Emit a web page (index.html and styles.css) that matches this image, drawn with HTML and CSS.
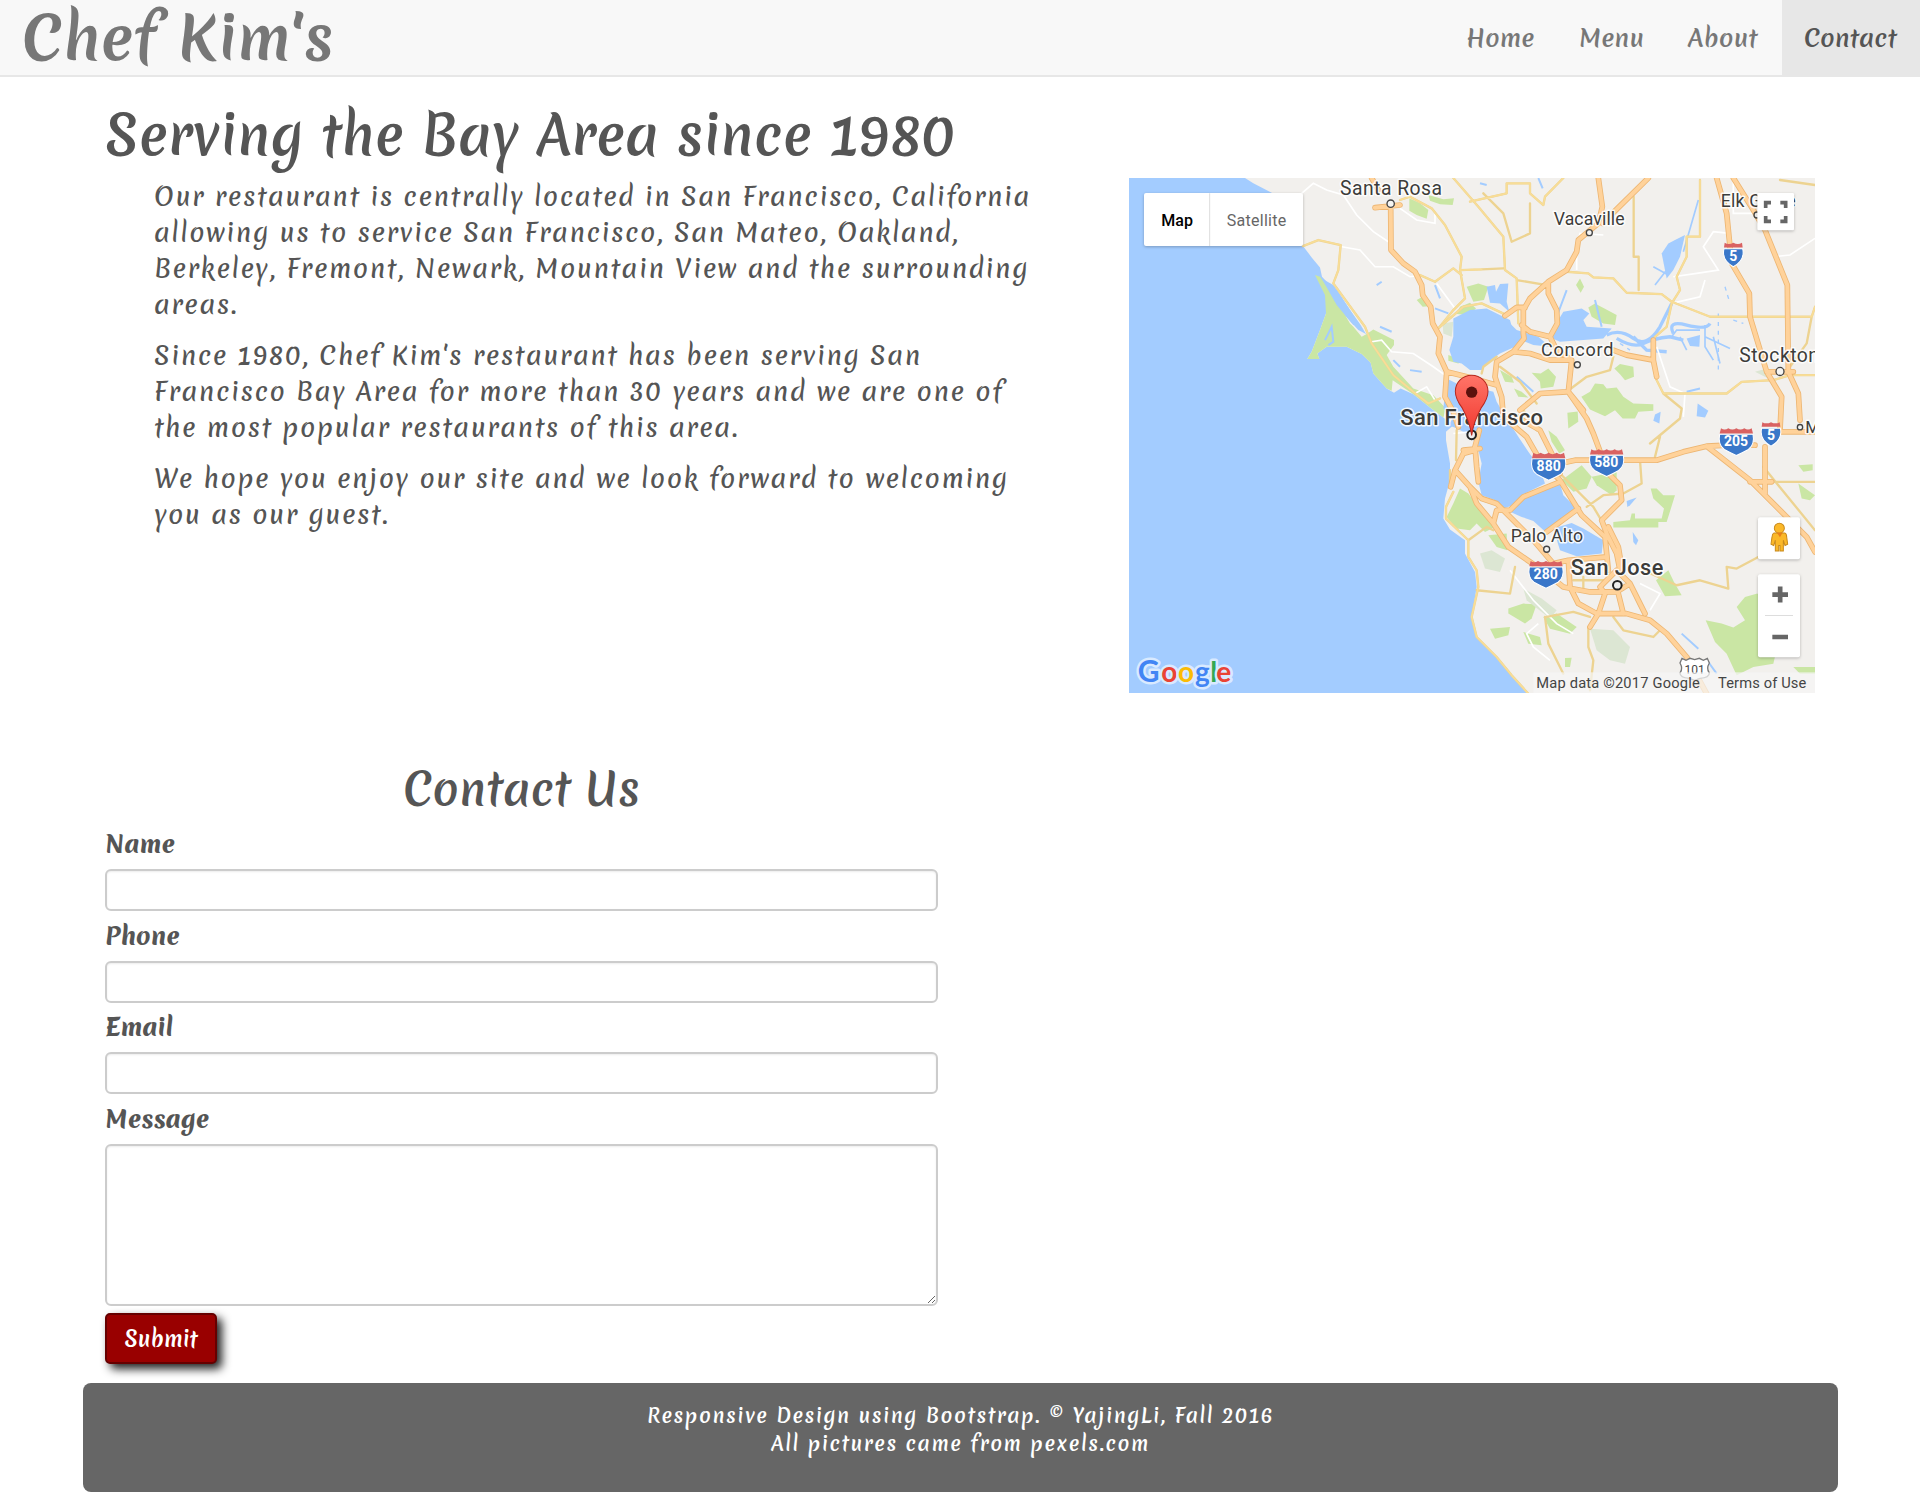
FILE: index.html
```html
<!DOCTYPE html>
<html lang="en">
<head>
<meta charset="utf-8">
<title>Chef Kim's - Contact</title>
<link rel="stylesheet" href="styles.css">
</head>
<body>
<nav class="navbar">
  <a class="brand" href="#">Chef Kim's</a>
  <div class="links">
    <a class="home" href="#">Home</a>
    <a class="menu" href="#">Menu</a>
    <a class="about" href="#">About</a>
    <a class="active" href="#">Contact</a>
  </div>
</nav>
<main class="container">
  <h1>Serving the Bay Area since 1980</h1>
  <div class="row">
    <div class="story">
      <p><span>Our restaurant is centrally located in San Francisco, California</span> <span>allowing us to service San Francisco, San Mateo, Oakland,</span> <span>Berkeley, Fremont, Newark, Mountain View and the surrounding</span> <span>areas.</span></p>
      <p><span>Since 1980, Chef Kim's restaurant has been serving San</span> <span>Francisco Bay Area for more than 30 years and we are one of</span> <span>the most popular restaurants of this area.</span></p>
      <p><span>We hope you enjoy our site and we look forward to welcoming</span> <span>you as our guest.</span></p>
    </div>
    <div class="map">
      <svg viewBox="27 24 2058 1544" preserveAspectRatio="none" width="686" height="515">
        <defs>
          <linearGradient id="pinfill" x1="0" y1="0" x2="0" y2="1"><stop offset="0" stop-color="#ff7468"/><stop offset="1" stop-color="#f0382e"/></linearGradient>
          <g id="interstate">
            <path d="M-50 -16Q-56 16 -36 30Q-18 40 0 48Q18 40 36 30Q56 16 50 -16Z" fill="#3a77c9" stroke="#fff" stroke-width="3"/>
            <path d="M-50 -18L-46 -34Q-35 -26 -24 -34Q-12 -26 0 -34Q12 -26 24 -34Q35 -26 46 -34L50 -18Z" fill="#d96262"/>
          </g>
          <g id="interstate-small">
            <path d="M-28 -16Q-36 18 0 38Q36 18 28 -16Z" fill="#3a77c9" stroke="#fff" stroke-width="3"/>
            <path d="M-28 -20L-26 -34Q-14 -27 0 -34Q14 -27 26 -34L28 -20Z" fill="#d96262"/>
          </g>
        </defs>
        <rect x="27" y="24" width="2058" height="1544" fill="#a3ccff"/>
        <!-- land -->
        <path class="land" d="M375 24L400 40L455 68L500 150L525 215L549 228L575 262L600 292L606 320L625 340L650 358L690 420L722 465L738 492L715 480L660 420L625 365L618 430L600 480L575 545L562 567L598 567L592 550L620 530L680 530L725 552L752 578L760 610L800 655L822 668L842 655L880 672L930 712L970 742L1000 765L978 785L978 810L990 880L990 930L975 985L970 1045L990 1078L1035 1110L1035 1150L1065 1205L1070 1250L1055 1340L1070 1400L1130 1460L1175 1515L1225 1570H2085V24Z"/>
        <!-- parks -->
        <g class="park">
          <path d="M585 315L615 375L618 430L600 480L575 545L562 567H598L592 550L620 530L680 530L725 552L752 578L760 610L800 655L815 662L818 630L880 672L930 712L970 742L978 715L940 675L880 655L820 590L800 555L822 525L822 510L760 478L740 492L725 500L700 470L690 460L640 375L600 320Z"/>
          <path d="M868 85L900 100L925 120L920 146L890 135L868 122Z"/><path d="M925 75L970 88L1002 85L998 105L960 103L930 92Z"/><path d="M890 390L912 378L935 408L908 410Z"/>
          <path d="M1040 350L1075 340L1105 350L1092 390L1060 395Z"/><path d="M1020 410L1050 398L1068 415L1045 435L1010 432Z"/><path d="M985 555L1028 570L1015 580L985 572Z"/>
          <path d="M1368 345L1380 325L1392 350L1382 368Z"/><path d="M1405 412L1425 400L1490 435L1485 465L1450 460L1415 440Z"/>
          <path d="M1235 608L1262 610L1285 595L1308 620L1300 650L1262 655L1260 635Z"/><path d="M1483 595L1500 582L1540 590L1542 620L1515 630L1500 612Z"/>
          <path d="M1384 680L1410 665L1425 640L1450 642L1460 655L1490 652L1510 680L1540 700L1600 702L1600 722L1555 725L1545 745L1508 745L1485 720L1455 738L1410 718Z"/>
          <path d="M1342 728L1373 724L1375 755L1345 775Z"/><path d="M1140 600L1175 620L1182 638L1155 635Z"/><path d="M1182 655L1205 665L1225 682L1195 680Z"/>
          <path d="M1020 955L1045 970L1090 1030L1125 1070L1095 1085L1070 1060L1050 1080L1010 1075L980 1040L1000 1000Z"/>
          <path d="M1105 1095L1160 1090L1162 1140L1130 1130Z"/><path d="M1325 930L1385 885L1415 920L1400 955L1360 965Z"/><path d="M1415 920L1490 905V960L1475 975L1430 945Z"/>
          <path d="M1592 955H1610L1630 975H1665L1648 1030L1640 1055H1615V1072H1480V1055L1530 1050L1535 1030H1545V1045H1625L1632 1015L1600 985Z"/>
          <path d="M1608 1230L1645 1200L1662 1235L1685 1275L1635 1278Z"/><path d="M1165 1315L1210 1300L1250 1302L1235 1345L1215 1360L1165 1330Z"/><path d="M1110 1375L1170 1370L1165 1395L1125 1405Z"/>
          <path d="M1270 1340L1310 1330L1370 1370L1350 1390L1290 1375Z"/><path d="M1210 1385L1260 1400L1265 1425L1225 1420Z"/><path d="M1335 1463L1355 1462L1350 1490H1335Z"/>
          <path d="M1757 1350L1805 1360L1840 1372L1875 1350L1850 1310L1875 1280L1912 1270L1990 1350L1960 1480L1900 1490L1850 1515L1820 1450L1785 1415Z"/><path d="M2035 885L2078 882V900L2050 905Z"/><path d="M2035 940L2085 975L2070 990L2045 985Z"/><path d="M2020 1490L2085 1490V1510H2040Z"/>
          <path d="M1285 780L1310 800L1335 840L1318 850L1295 815Z"/>
        </g>
        <g class="hills"><path d="M1080 1150L1115 1140L1155 1165L1140 1205L1095 1195Z"/><path d="M1210 1255L1265 1285L1310 1320L1290 1345L1220 1290Z"/><path d="M1410 1375L1480 1380L1530 1430L1515 1480L1470 1470L1430 1440Z"/><path d="M968 460L1000 455L995 500L970 490Z"/><path d="M1905 605L1940 595L1945 625Z"/></g>
        <!-- bays, rivers and lakes -->
        <g class="water">
          <path d="M1000 445L1050 420L1100 415L1170 450L1180 488L1212 500L1185 530L1140 550L1110 572L1085 600L1050 600L1025 580L1000 575L988 540L1000 500Z"/>
          <path d="M1100 350L1125 345L1128 365L1140 342L1165 340L1160 395L1168 425L1140 400L1110 398Z"/>
          <path d="M1150 440L1190 480L1255 500L1290 530L1240 525L1180 500Z"/>
          <path d="M980 625L1010 640L1060 650L1120 665L1130 695L1145 720L1195 800L1225 845L1258 890L1275 940L1205 975L1180 1005L1150 1015L1125 990L1085 975L1075 935L1085 880L1075 840L1055 800L1012 775L985 765L1000 742L970 715Z"/>
          <path d="M1180 990L1270 948L1320 940L1330 975L1368 1012L1325 1050L1280 1088L1240 1052L1205 1040L1165 1022Z"/>
          <path d="M1300 1075L1355 1058L1390 1075L1450 1110L1445 1150L1370 1158L1320 1140Z"/>
          <path d="M1285 500L1330 425L1385 415L1408 430L1390 450L1400 470L1475 475L1450 505L1320 515Z"/>
          <path d="M1645 220L1665 210L1695 195L1680 260L1660 300L1640 325L1625 250Z"/>
          <path d="M1700 505L1740 495L1738 530L1710 528Z"/><path d="M1733 700L1765 722L1755 742L1730 738Z"/><path d="M1605 733L1622 725L1618 760L1600 752Z"/><path d="M1520 992L1550 982L1530 1005L1522 1010Z"/><path d="M1538 1085L1555 1110L1548 1125L1540 1115Z"/>
          <path d="M605 325L640 345L720 465L700 465L650 405Z"/>
        </g>
        <g class="river">
          <path d="M1460 495Q1500 475 1540 505T1620 470L1655 400M1490 505Q1540 535 1570 520T1650 500L1690 510M1540 500L1580 540L1640 545M1660 490Q1640 450 1700 465T1770 460" stroke-width="10"/>
          <path d="M1690 245L1735 90M1640 300L1605 345M1600 290L1645 315M1755 465V530L1780 570M1755 500L1830 535M1680 500L1700 540M1655 500L1670 480L1740 480M1780 500L1800 580" stroke-width="5"/>
          <path d="M615 510L635 470L640 515L625 525M780 470L815 485M945 345L960 385M945 415L985 430M870 600L905 605M820 570L840 590M770 345L785 335M1255 24L1268 55M1080 40L1100 45M1310 440L1340 360M1425 390L1445 470M1190 620L1240 665M1700 665L1740 655M1685 1390L1735 1435M1765 1475L1790 1510" stroke-width="6"/>
          <path d="M1795 430V600M1815 350L1830 400M1840 450L1870 460M1500 520L1530 540" stroke-width="4" stroke-dasharray="12 14"/>
        </g>
        <!-- local roads -->
        <g class="lane"><path d="M545 70L580 40L620 60L670 75L710 135L760 185L805 215M665 230L720 240L765 290L820 290L870 320L905 315M755 515L785 510L815 545L880 550L940 590L975 615M840 115L890 150L945 160V130M950 340L1005 415M885 670L920 650L945 690M1370 300V240L1380 190L1450 195M1840 24V130H1900M1830 190L1780 185L1750 230L1795 300L1730 310L1660 320M1655 400L1740 380L1755 330M1610 530L1650 650L1695 670L1690 740M1170 1200L1240 1290L1310 1360L1360 1390M1255 1360L1220 1390L1240 1430L1290 1470M1560 1240L1620 1270L1590 1320M2085 205L2010 255L1960 260M1000 790L1050 785"/></g>
        <!-- highways -->
        <g><path class="minor-case" d="M549 228L595 210L662 225L655 300L640 340L735 470L755 520L820 615L880 665L925 700L960 685M840 90L870 80L935 115L975 165L1025 260L1020 300L1085 298M1000 24L1075 110L1150 200L1155 300L1190 325L1195 460M1050 95L1160 70V40H1230V70L1270 105L1275 80L1330 24M1090 70L1150 130L1175 215L1230 190V100M1020 300L1035 385L1000 420L955 475M1085 298L1150 295M900 315L945 335L1000 295L1025 315M1190 330L1280 345M1340 305L1405 310L1420 322L1480 325L1520 368L1625 372L1655 395L1770 440H2075L2085 410M1541 80V260H1556V360M1740 30V200H1700V260L1670 320L1680 360L1655 400L1640 470L1605 500M2075 440L2060 520L2010 590M1980 30L2085 45M1605 620L1630 670H1820L1865 635L1960 630L2010 615H2085M1480 560L1470 600L1400 620L1340 665M1630 670L1685 715L1680 745L1590 820M1010 780L1008 870M990 900V940M1000 965L978 1010V1045L1045 1110L1045 1160L1070 1200L1075 1250L1055 1340L1070 1400L1130 1460L1175 1515L1225 1570M1045 1110L1100 1070L1120 1080M1070 1260L1170 1270L1185 1190M1280 1340L1360 1325L1410 1340M1275 1340L1285 1420L1330 1510M1405 1370V1430L1420 1470L1410 1560M1480 1340L1510 1380L1600 1400L1620 1380M1570 1200L1670 1245L1740 1230L1825 1255L1820 1190L1850 1195L1915 1160M1560 870L1565 940L1510 970L1450 975L1400 1010M1605 860L1620 800M1320 910L1420 1010L1450 1060M2085 935H1960M1930 890L2085 1080M1140 590L1200 635L1250 700M1130 560L1090 590L1085 610M1210 720L1250 780M1390 1220V1260M1360 1230H1450"/><path class="minor" d="M549 228L595 210L662 225L655 300L640 340L735 470L755 520L820 615L880 665L925 700L960 685M840 90L870 80L935 115L975 165L1025 260L1020 300L1085 298M1000 24L1075 110L1150 200L1155 300L1190 325L1195 460M1050 95L1160 70V40H1230V70L1270 105L1275 80L1330 24M1020 300L1035 385L1000 420L955 475M900 315L945 335L1000 295L1025 315M1340 305L1405 310L1420 322L1480 325L1520 368L1625 372L1655 395L1770 440H2075L2085 410M1740 30V200H1700V260L1670 320L1680 360L1655 400L1640 470L1605 500M1605 620L1630 670H1820L1865 635L1960 630L2010 615H2085M1000 965L978 1010V1045L1045 1110L1045 1160L1070 1200L1075 1250L1055 1340L1070 1400L1130 1460L1175 1515L1225 1570"/><path class="minor-case" d="M955 475L1030 410L1085 400L1160 435"/><path class="minor" d="M955 475L1030 410L1085 400L1160 435"/></g>
        <path class="major-case" d="M755 24L775 60M765 113L840 105M812 105L813 240L850 280L885 305L905 345L908 375L932 410L938 460L960 500L955 550L980 605L975 680L1000 725L1015 770M980 605L1050 622L1130 645M1435 24L1447 110L1435 160L1375 210L1370 245L1340 300L1285 335L1230 385L1210 420V490L1212 505L1180 545L1130 575L1125 620L1145 680L1150 740M1585 24L1447 160M1155 437L1190 412H1215M1285 335L1285 370L1310 420L1312 460L1290 500L1230 485L1205 465M1290 500L1310 540L1355 570L1345 665L1400 745L1420 790L1465 910L1500 945L1505 990L1445 1050L1460 1090M1180 545L1230 550L1290 570H1350M1480 540L1520 555L1600 570L1610 620M1600 570V510M1340 665L1260 670L1200 720M1345 665L1390 720M1150 740L1220 800L1260 870L1320 930L1385 1035L1455 1100L1465 1200M1190 740L1260 780L1295 850L1320 910M1320 880L1365 870H1440M1500 870H1610L1690 845L1760 828L1820 825H1905M1760 828L1890 930L2000 1040L2060 1100L2085 1145M1790 24L1820 130L1835 280L1888 370L1890 440L1940 605L1985 680L1980 780M1840 24L1900 120L1935 180L2002 345L2005 605L2035 670L2040 750M1940 605H2020M1935 830V970M1890 935H1955M1980 785H2085M1030 840L1080 835M1078 780L1065 830L1070 890L1075 935M1065 840L1030 850L1005 900L992 950M1005 900L1050 950L1085 985L1130 1000L1240 1110L1300 1180L1345 1170L1460 1160M1050 950L1070 1000L1120 1060L1165 1130L1230 1175L1280 1210L1330 1250L1410 1265H1490L1530 1240M1120 1060L1130 1020L1170 1020L1210 980L1320 935M1280 1085L1375 1015M1345 1170L1350 1250L1375 1300L1430 1330H1520L1590 1350L1640 1390L1700 1460L1760 1570M1435 1330L1455 1270L1440 1250L1490 1200L1530 1240L1560 1300L1575 1330M1490 1250L1510 1330M1460 1090L1490 1150L1500 1200M1465 1070L1495 1130L1505 1190M1435 1330L1410 1370"/>
        <path class="major" d="M755 24L775 60M765 113L840 105M812 105L813 240L850 280L885 305L905 345L908 375L932 410L938 460L960 500L955 550L980 605L975 680L1000 725L1015 770M980 605L1050 622L1130 645M1435 24L1447 110L1435 160L1375 210L1370 245L1340 300L1285 335L1230 385L1210 420V490L1212 505L1180 545L1130 575L1125 620L1145 680L1150 740M1585 24L1447 160M1155 437L1190 412H1215M1285 335L1285 370L1310 420L1312 460L1290 500L1230 485L1205 465M1290 500L1310 540L1355 570L1345 665L1400 745L1420 790L1465 910L1500 945L1505 990L1445 1050L1460 1090M1180 545L1230 550L1290 570H1350M1480 540L1520 555L1600 570L1610 620M1600 570V510M1340 665L1260 670L1200 720M1345 665L1390 720M1150 740L1220 800L1260 870L1320 930L1385 1035L1455 1100L1465 1200M1190 740L1260 780L1295 850L1320 910M1320 880L1365 870H1440M1500 870H1610L1690 845L1760 828L1820 825H1905M1760 828L1890 930L2000 1040L2060 1100L2085 1145M1790 24L1820 130L1835 280L1888 370L1890 440L1940 605L1985 680L1980 780M1840 24L1900 120L1935 180L2002 345L2005 605L2035 670L2040 750M1940 605H2020M1935 830V970M1890 935H1955M1980 785H2085M1030 840L1080 835M1078 780L1065 830L1070 890L1075 935M1065 840L1030 850L1005 900L992 950M1005 900L1050 950L1085 985L1130 1000L1240 1110L1300 1180L1345 1170L1460 1160M1050 950L1070 1000L1120 1060L1165 1130L1230 1175L1280 1210L1330 1250L1410 1265H1490L1530 1240M1120 1060L1130 1020L1170 1020L1210 980L1320 935M1280 1085L1375 1015M1345 1170L1350 1250L1375 1300L1430 1330H1520L1590 1350L1640 1390L1700 1460L1760 1570M1435 1330L1455 1270L1440 1250L1490 1200L1530 1240L1560 1300L1575 1330M1490 1250L1510 1330M1460 1090L1490 1150L1500 1200M1465 1070L1495 1130L1505 1190M1435 1330L1410 1370"/>
        <!-- route shields -->
        <use href="#interstate-small" x="1840" y="252"/><use href="#interstate-small" x="1953" y="790"/>
        <use href="#interstate" x="1286" y="882"/><use href="#interstate" x="1460" y="871"/><use href="#interstate" x="1849" y="808"/><use href="#interstate" x="1278" y="1206"/>
        <g class="shield"><text x="1840" y="272">5</text><text x="1953" y="811">5</text><text x="1286" y="901">880</text><text x="1459" y="890">580</text><text x="1848" y="828">205</text><text x="1277" y="1226">280</text></g>
        <path d="M1686 1464L1698 1470L1710 1464L1724 1468L1738 1464L1750 1470L1762 1464L1768 1478Q1758 1495 1768 1508Q1768 1522 1740 1524L1724 1530L1708 1524Q1680 1522 1680 1508Q1690 1495 1680 1478Z" fill="#fff" stroke="#777" stroke-width="4"/>
        <text x="1724" y="1512" font-size="36" text-anchor="middle" fill="#444" font-family="Roboto, sans-serif">101</text>
        <!-- towns -->
        <g fill="#f5f5f3" stroke="#444" stroke-width="4"><circle cx="812" cy="101" r="11"/><circle cx="1408" cy="188" r="9"/><circle cx="1372" cy="584" r="9"/><circle cx="1980" cy="604" r="12"/><circle cx="1280" cy="1137" r="9"/><circle cx="1911" cy="135" r="9"/><circle cx="2040" cy="771" r="8"/></g>
        <g fill="#eee" stroke="#222" stroke-width="6"><circle cx="1055" cy="794" r="13"/><circle cx="1492" cy="1245" r="13"/></g>
        <g class="town">
          <text x="660" y="75" font-size="58" textLength="306">Santa Rosa</text><text x="1301" y="165" font-size="53" textLength="213">Vacaville</text><text x="1802" y="111" font-size="53" textLength="225">Elk Grove</text><text x="1263" y="558" font-size="54" textLength="217">Concord</text><text x="1858" y="577" font-size="58" textLength="239">Stockton</text><text x="2056" y="790" font-size="50">M</text><text x="1172" y="1116" font-size="53" textLength="217">Palo Alto</text>
          <g font-weight="500"><text x="841" y="764" font-size="66" textLength="428">San Francisco</text><text x="1352" y="1214" font-size="65" textLength="278">San Jose</text></g>
        </g>
        <path d="M1055 796Q1050 756 1027 714Q1006 686 1006 664A49 49 0 0 1 1104 664Q1104 686 1083 714Q1060 756 1055 796Z" fill="url(#pinfill)" stroke="#b5281f" stroke-width="3"/><circle cx="1055" cy="666" r="17" fill="#5c110d"/>
        <!-- controls -->
        <g class="card"><rect x="72" y="69" width="477" height="159" rx="6"/><rect x="1912" y="69" width="110" height="112" rx="4"/><rect x="1914" y="1041" width="126" height="126" rx="6"/><rect x="1914" y="1212" width="126" height="249" rx="6"/></g>
        <path d="M269 70V228M1935 1336H2019" stroke="#ddd" stroke-width="3"/>
        <g font-family="Roboto, sans-serif" font-size="48"><text x="124" y="168" font-weight="500" textLength="95">Map</text><text x="320" y="168" fill="#666" textLength="179">Satellite</text></g>
        <path d="M1937 114V98H1953M1981 98H1997V114M1997 138V154H1981M1953 154H1937V138" fill="none" stroke="#666" stroke-width="11"/>
        <path d="M1957 1273H2004M1980.500 1249V1297M1957 1400H2004" stroke="#666" stroke-width="14"/>
        <g fill="#fbb829" stroke="#c98a1b" stroke-width="3"><path d="M1962 1088H1994Q2000 1090 2000 1100L2003 1122L1995 1126L1990 1110V1142H1980V1126H1976V1142H1966V1110L1961 1126L1953 1122L1956 1100Q1957 1090 1962 1088Z"/><circle cx="1978" cy="1074" r="15"/></g><path d="M1970 1087H1988L1980 1101Z" fill="#e8801b"/>
        <rect x="1240" y="1506" width="845" height="62" fill="#f5f5f5" fill-opacity=".72"/>
        <g font-family="Roboto, sans-serif" font-size="44" fill="#444"><text x="1249" y="1554" textLength="490">Map data ©2017 Google</text><text x="1794" y="1554" textLength="265">Terms of Use</text></g>
        <g class="google"><text x="53" y="1534" font-size="90" fill="#4285f4">G</text><text x="124" y="1534" fill="#ea4335">o</text><text x="174" y="1534" fill="#fbbc05">o</text><text x="225" y="1534" fill="#4285f4">g</text><text x="271" y="1534" fill="#34a853">l</text><text x="289" y="1534" fill="#ea4335">e</text></g>
      </svg>
    </div>
  </div>
  <form class="contact">
    <h2>Contact Us</h2>
    <label for="name">Name</label><input id="name" type="text">
    <label for="phone">Phone</label><input id="phone" type="text">
    <label for="email">Email</label><input id="email" type="text">
    <label for="message">Message</label><textarea id="message"></textarea>
    <button type="button">Submit</button>
  </form>
</main>
<footer class="footer"><p>Responsive Design using Bootstrap. © YajingLi, Fall 2016</p><p>All pictures came from pexels.com</p></footer>
</body>
</html>
```
FILE: styles.css
```css
* { box-sizing: border-box; }
body { margin: 0; height: 1492px; overflow: hidden; background: #fff; color: #555; font-family: Merienda, Lato, sans-serif; font-weight: 600; }
h1, h2, p { margin: 0; font-weight: 650; white-space: nowrap; }
a { color: #777; text-decoration: none; }
.navbar { display: flex; justify-content: space-between; height: 77px; background: #f8f8f8; border-bottom: 2px solid #e7e7e7; }
.brand { padding-left: 22px; font-size: 60px; font-weight: 700; line-height: 75px; height: 75px; }
.links { display: flex; height: 77px; font-size: 24px; line-height: 76px; }
.links a { padding-left: 22px; white-space: nowrap; }
.home { width: 113px; }
.menu { width: 109px; }
.about { width: 116px; }
.links .active { width: 138px; background: #e7e7e7; color: #555; }
.container { padding: 19px 105px 0; }
h1 { height: 82px; font-size: 53.3px; line-height: 78px; }
.row { display: flex; justify-content: space-between; height: 515px; }
.story { padding: 1px 0 0 49px; font-size: 25px; line-height: 36px; letter-spacing: 1.45px; }
.story p { margin-bottom: 15px; font-weight: 550; }
.story span { display: block; }
.map { width: 686px; height: 515px; }
.map svg { display: block; font-weight: 400; }
.contact { width: 833px; padding-top: 62px; }
h2 { height: 67px; font-size: 43.4px; line-height: 67px; text-align: center; }
label { display: block; height: 47px; font-size: 23.8px; line-height: 45px; font-weight: 800; letter-spacing: -.2px; }
input, textarea { display: block; width: 833px; height: 42px; margin: 0 0 2.500px; padding: 6px 12px; border: 2px solid #ccc; border-radius: 6px; background: #fff; box-shadow: inset 0 1px 2px rgba(0,0,0,.08); }
textarea { height: 162px; margin-bottom: 7px; }
button { display: block; width: 112px; height: 51px; padding: 2px 0 0; border: 2px solid #600; border-radius: 5px; background: #900; color: #fff; box-shadow: 5px 5px 10px #222; font: 700 21px/45px Merienda, Lato, sans-serif; }
.footer { height: 109px; margin: 19px 82px 0 83px; padding-top: 19px; border-radius: 8px; background: #666; color: #fff; text-align: center; font-size: 19.400px; line-height: 28px; letter-spacing: 1.500px; }
.land { fill: #f2f0ed; }
.park { fill: #cae6a4; }
.hills { fill: #dce6d3; }
.water { fill: #a3ccff; }
.river { fill: none; stroke: #a3ccff; }
.lane { fill: none; stroke: #fff; stroke-width: 5; }
.minor-case, .minor, .major-case, .major { fill: none; stroke-linejoin: round; stroke-linecap: round; }
.minor-case { stroke: #edd391; stroke-width: 7; }
.minor { stroke: #f8dd97; stroke-width: 5; }
.major-case { stroke: #edb673; stroke-width: 17; }
.major { stroke: #ffd29a; stroke-width: 12; }
.shield { font: 700 42px Roboto, sans-serif; fill: #fff; text-anchor: middle; }
.town { font-family: Roboto, sans-serif; fill: #3c3c3a; stroke: #fff; stroke-width: 9; stroke-opacity: .85; stroke-linejoin: round; paint-order: stroke; }
.card { fill: #fff; filter: drop-shadow(0 3px 4px rgba(0,0,0,.25)); }
.google { font: 700 84px Lato, sans-serif; stroke: #d9eaff; stroke-width: 15; stroke-linejoin: round; paint-order: stroke; }
```
